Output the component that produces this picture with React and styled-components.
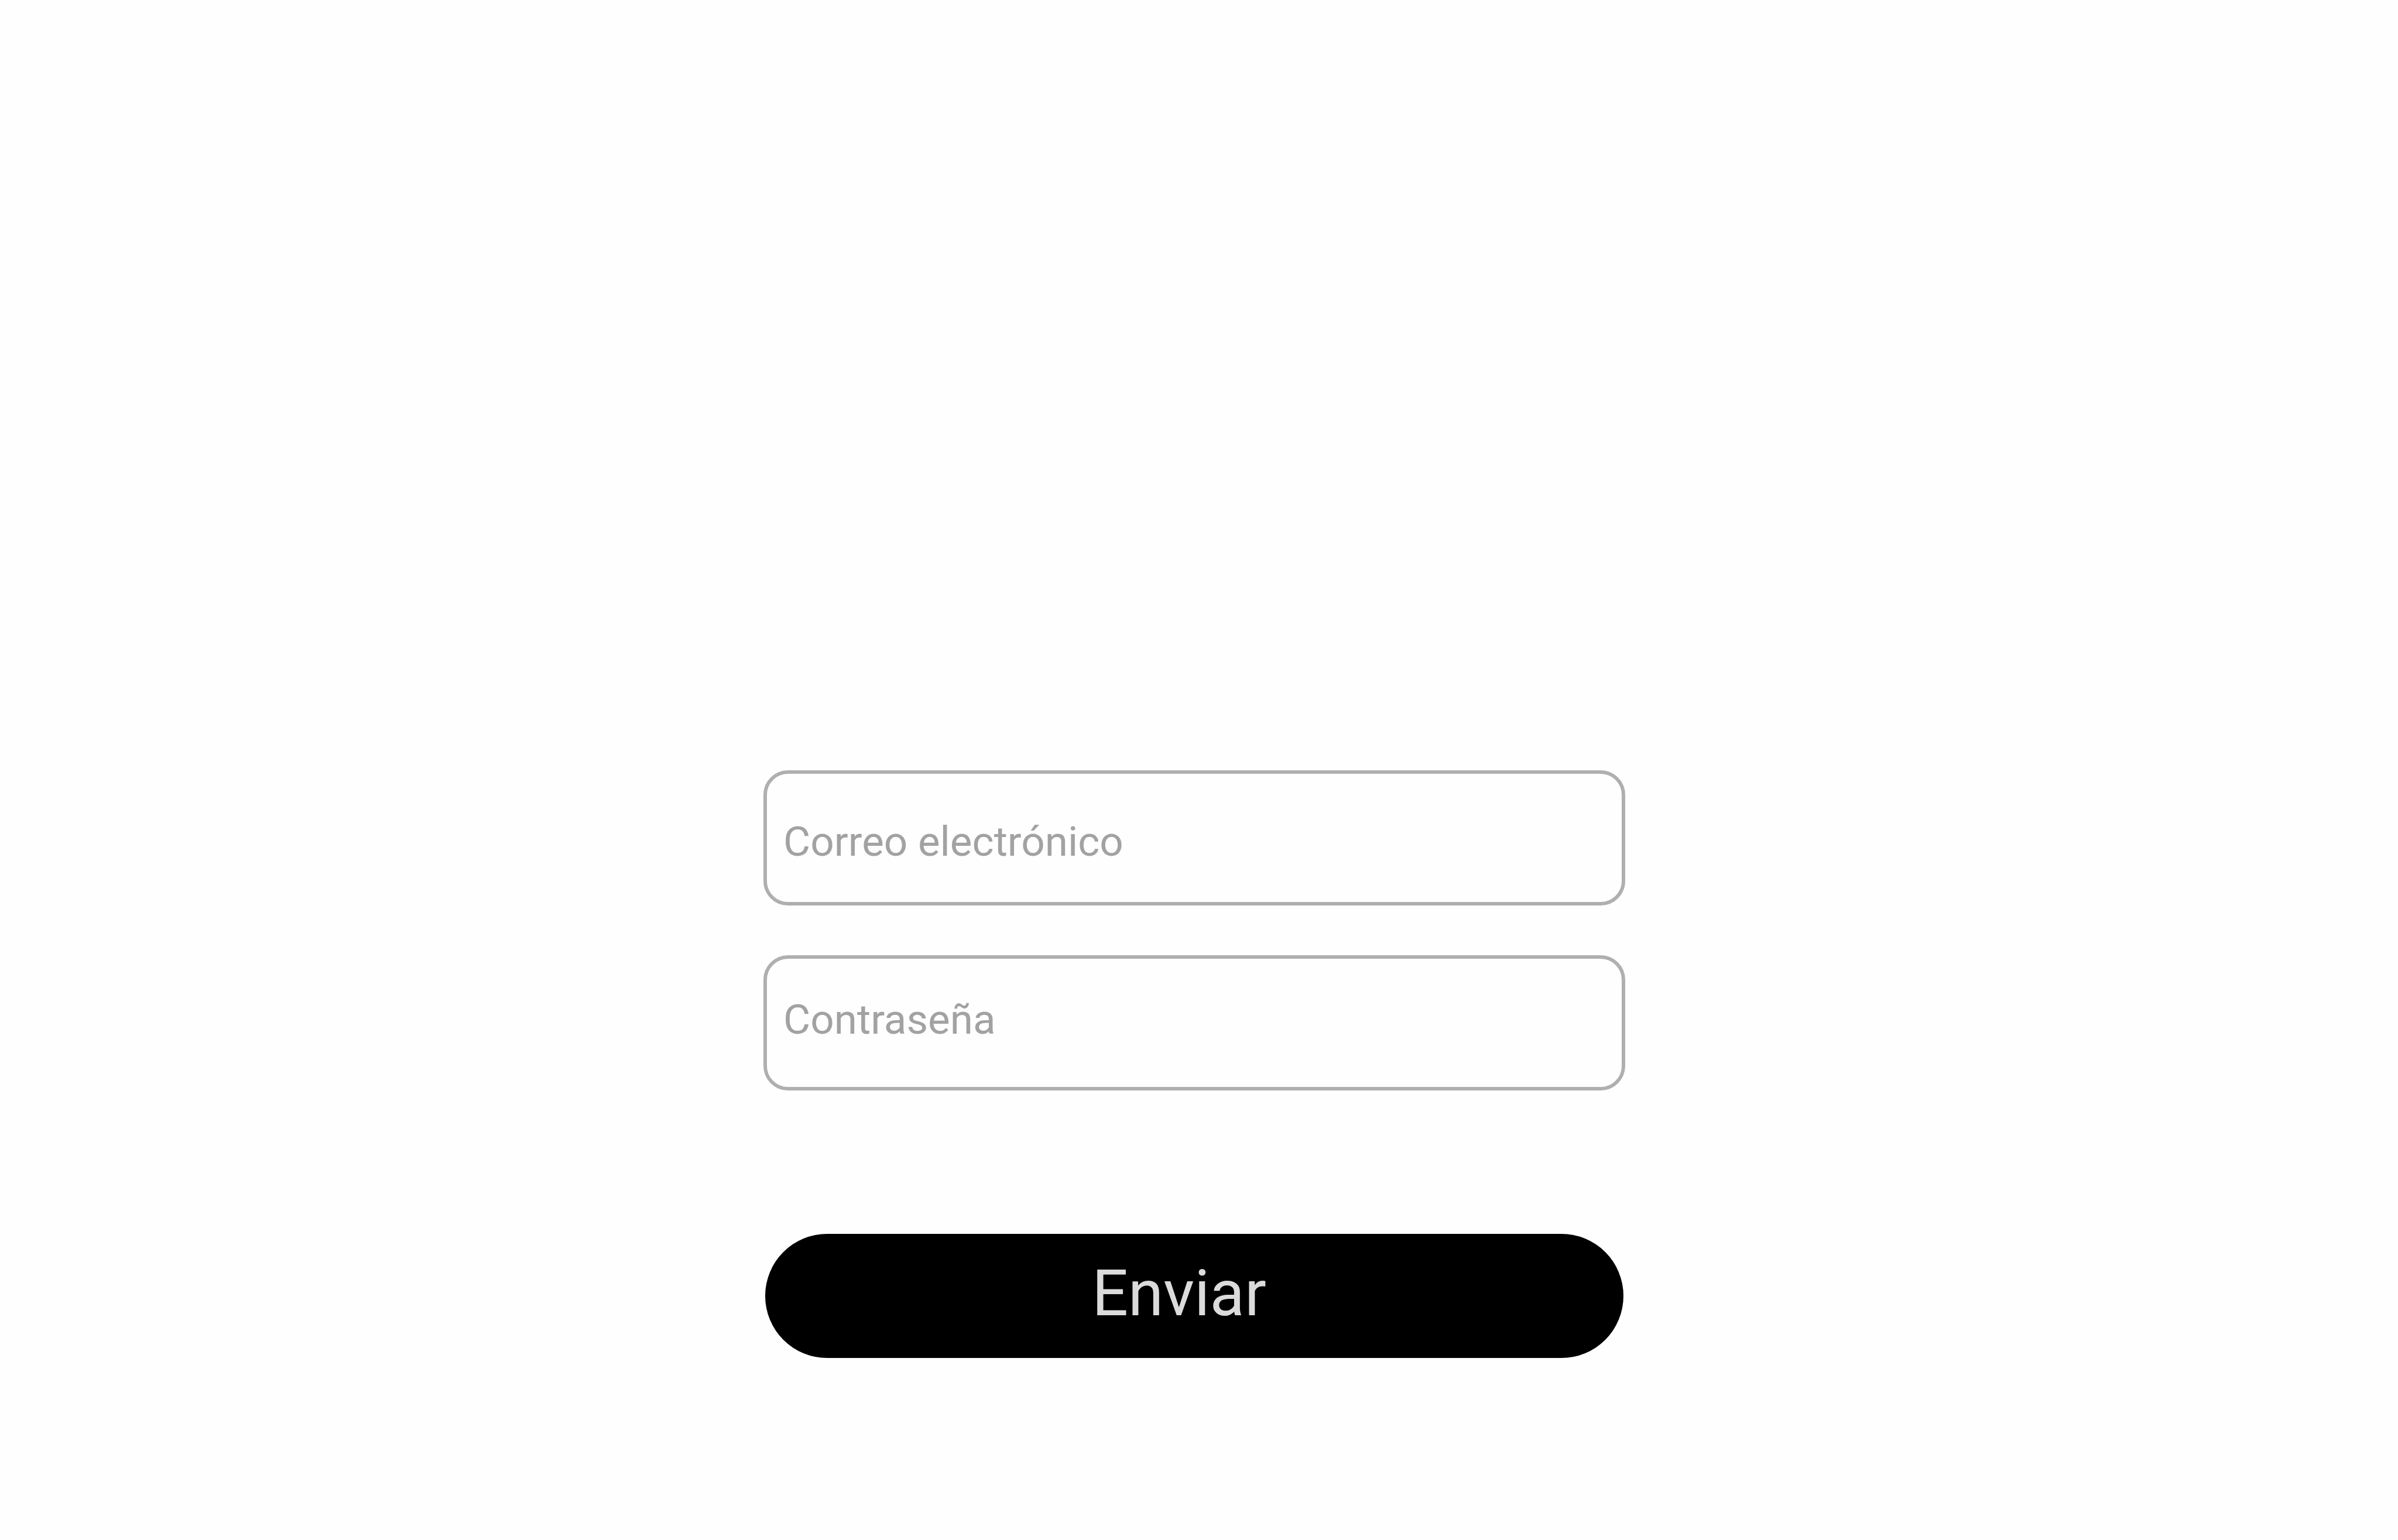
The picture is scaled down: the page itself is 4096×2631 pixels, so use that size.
import React from "react";
import styled, { createGlobalStyle } from "styled-components";

const GlobalStyle = createGlobalStyle`
  *, *::before, *::after {
    box-sizing: border-box;
  }

  body {
    margin: 0;
    background: #fefefe;
    font-family: Roboto, "Liberation Sans", sans-serif;
  }
`;

const Page = styled.main`
  display: flex;
  flex-direction: column;
  align-items: center;
  min-height: 100vh;
  padding: 50vh 16px 0 0;
`;

const LoginForm = styled.form`
  display: flex;
  flex-direction: column;
  width: 100%;
  max-width: 1472px;
`;

const FieldGroup = styled.div`
  display: grid;
  gap: 85px;
  margin-bottom: 245px;
`;

const fieldPadding = {
  low: "12px 28px 0",
  high: "0 28px 12px",
};

const Field = styled.input`
  width: 100%;
  height: 231px;
  padding: ${({ $placement }) => fieldPadding[$placement]};
  border: 6px solid #afafaf;
  border-radius: 42px;
  outline: none;
  background: transparent;
  color: #444444;
  font-family: inherit;
  font-size: 71px;
  font-weight: 450;

  &::placeholder {
    color: #a2a2a2;
    opacity: 1;
  }

  &:focus {
    border-color: #000000;
  }
`;

const SubmitButton = styled.button`
  height: 212px;
  margin: 0 3px;
  padding: 0 52px 8px 0;
  border: 0;
  border-radius: 106px;
  background: #000000;
  color: #dbdbdb;
  font-family: inherit;
  font-size: 109px;
  font-weight: 450;
  cursor: pointer;
`;

export default function App() {
  return (
    <>
      <GlobalStyle />
      <Page>
        <LoginForm onSubmit={(event) => event.preventDefault()}>
          <FieldGroup>
            <Field
              $placement="low"
              type="email"
              name="email"
              autoComplete="email"
              aria-label="Correo electrónico"
              placeholder="Correo electrónico"
            />
            <Field
              $placement="high"
              type="password"
              name="password"
              autoComplete="current-password"
              aria-label="Contraseña"
              placeholder="Contraseña"
            />
          </FieldGroup>
          <SubmitButton type="submit">Enviar</SubmitButton>
        </LoginForm>
      </Page>
    </>
  );
}
